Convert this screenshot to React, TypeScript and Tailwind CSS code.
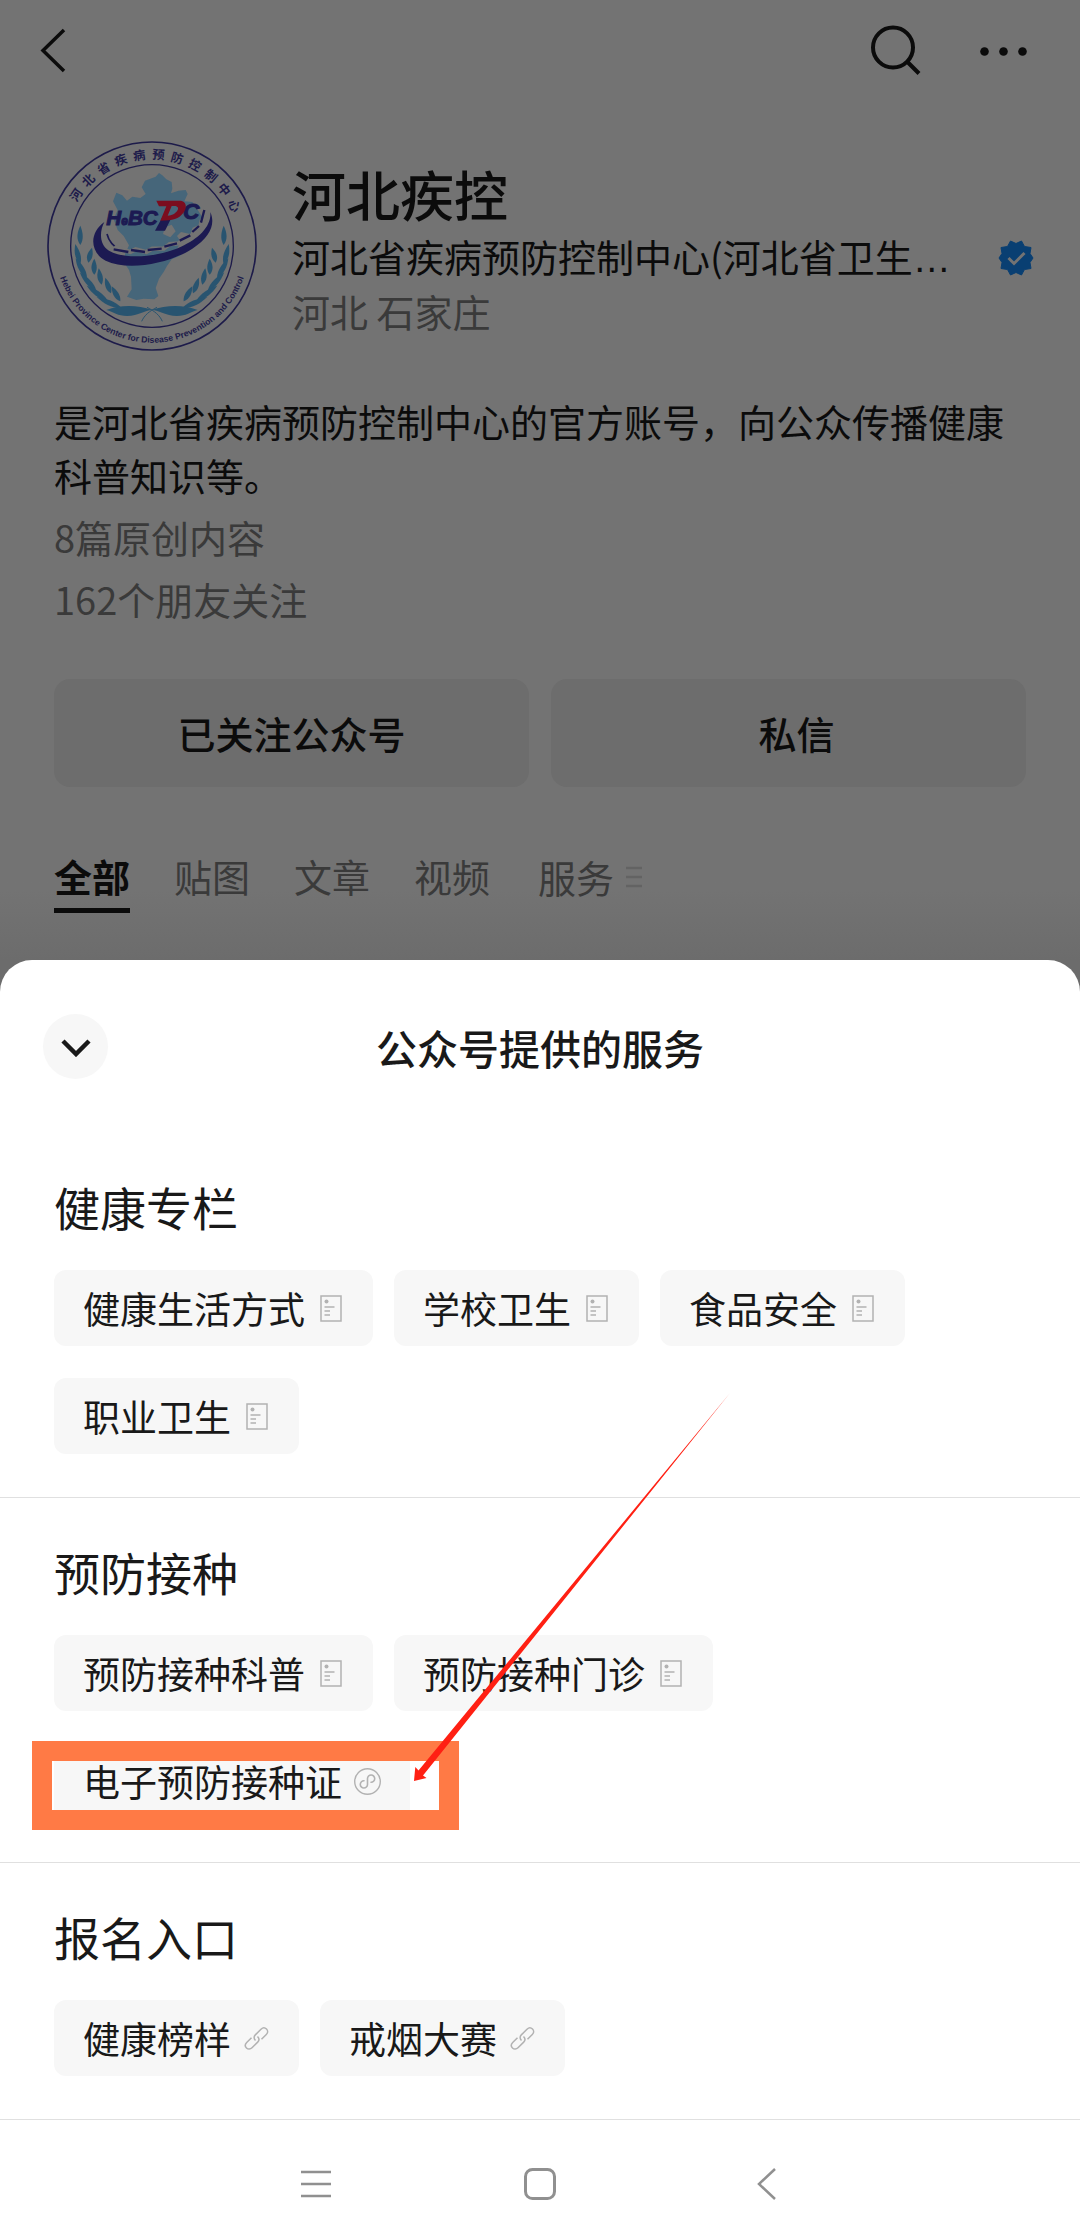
import type { ReactNode } from "react";

type ChipKind = "article" | "mini" | "link";

type Service = {
  label: string;
  kind: ChipKind;
  marked?: boolean;
};

const TABS = ["全部", "贴图", "文章", "视频"];

const GROUPS: { title: string; items: Service[] }[] = [
  {
    title: "健康专栏",
    items: [
      { label: "健康生活方式", kind: "article" },
      { label: "学校卫生", kind: "article" },
      { label: "食品安全", kind: "article" },
      { label: "职业卫生", kind: "article" },
    ],
  },
  {
    title: "预防接种",
    items: [
      { label: "预防接种科普", kind: "article" },
      { label: "预防接种门诊", kind: "article" },
      { label: "电子预防接种证", kind: "mini", marked: true },
    ],
  },
  {
    title: "报名入口",
    items: [
      { label: "健康榜样", kind: "link" },
      { label: "戒烟大赛", kind: "link" },
    ],
  },
];

const SEAL_TEXT = "河北省疾病预防控制中心";

// [x, y, rotation, length] of each leaf on the left branch
const LEAVES = [
  [150, 345, 0, 58],
  [150, 402, -14, 62],
  [174, 398, 14, 46],
  [170, 444, -30, 68],
  [192, 434, 0, 48],
  [198, 482, -42, 74],
  [214, 464, -10, 50],
  [232, 512, -54, 78],
  [242, 490, -20, 50],
  [274, 534, -66, 82],
  [270, 514, -30, 52],
];

function Laurel() {
  return (
    <g fill="#285470">
      {LEAVES.map(([x, y, r, len]) => (
        <path
          key={`${x}-${y}`}
          transform={`translate(${x} ${y}) rotate(${r})`}
          d={`M0 0C-13 ${-len * 0.3} -10 ${-len * 0.65} 0 ${-len}C8 ${-len * 0.65} 11 ${-len * 0.3} 0 0Z`}
        />
      ))}
      <path d="M228 540C270 524 320 524 366 540C342 540 326 558 290 558C262 558 250 546 228 540Z" />
      <path d="M334 574C342 556 356 544 380 532" fill="none" stroke="#285470" strokeWidth="3" />
    </g>
  );
}

function Seal() {
  return (
    <svg viewBox="47 30 636 636" className="size-[212px] shrink-0" role="img" aria-label="河北疾控">
      <circle cx="365" cy="348" r="312" fill="none" stroke="#1d1b4a" strokeWidth="5" />
      <circle cx="365" cy="348" r="244" fill="none" stroke="#1d1b4a" strokeWidth="4" />
      <g
        fill="#1d1b4a"
        fontSize="37"
        fontWeight="700"
        textAnchor="middle"
        fontFamily="'Noto Sans CJK SC', sans-serif"
      >
        {SEAL_TEXT.split("").map((ch, i) => (
          <text key={ch} x="365" y="87" transform={`rotate(${-56 + i * 12} 365 348)`}>
            {ch}
          </text>
        ))}
      </g>
      <path id="seal-arc" d="M78 400A292 292 0 0 0 652 400" fill="none" />
      <text
        fill="#1d1b4a"
        fontSize="26"
        fontWeight="700"
        textAnchor="middle"
        fontFamily="'Liberation Sans Narrow', 'Liberation Sans', sans-serif"
      >
        <textPath href="#seal-arc" startOffset="50%">
          Hebei Province Center for Disease Prevention and Control
        </textPath>
      </text>
      <path
        fill="#46667a"
        d="M360 146L376 140L386 129L396 136L408 148L424 156L426 176L422 190L444 182L466 180L472 192L462 214L486 216L500 236L516 262L508 296L480 312L452 306L440 318L452 336L440 356L452 376L424 388L410 408L400 426L386 446L376 474L384 498L372 508L340 506L318 510L290 500L304 478L302 440L296 420L284 402L284 372L296 346L280 318L262 300L250 268L262 240L248 214L258 188L276 196L290 212L306 200L330 204L346 192L334 172L344 152Z"
      />
      <path d="M404 292L424 284L436 304L420 322L398 312Z" fill="#737373" />
      <Laurel />
      <g transform="translate(730 0) scale(-1 1)">
        <Laurel />
      </g>
      <path
        fill="#1c1a52"
        d="M222 276C178 306 176 366 226 392C292 424 414 402 486 356C540 320 556 282 540 246C544 288 506 326 452 350C378 384 280 388 236 362C208 344 206 308 222 276Z"
      />
      <path d="M230 312C236 336 250 350 270 360" fill="none" stroke="#1c1a52" strokeWidth="5" />
      <path
        d="M246 362L258 352L300 366L316 358L348 366L366 356L400 356L418 342L446 340L460 324L486 316L492 298L510 290L514 272L524 262L520 240"
        fill="none"
        stroke="#737373"
        strokeWidth="13"
      />
      <path
        d="M250 358L294 366M302 360L344 366M352 360L394 356M402 350L440 340M448 332L480 316M486 306L506 288M512 278L522 240"
        fill="none"
        stroke="#1c1a52"
        strokeWidth="7"
      />
      <g
        fill="#1c1a52"
        fontFamily="'Liberation Sans', Arial, sans-serif"
        fontStyle="italic"
        fontWeight="700"
        stroke="#1c1a52"
        strokeWidth="3"
      >
        <text x="228" y="286" fontSize="62">
          H<tspan fontSize="36">e</tspan>BC
        </text>
        <text x="458" y="266" fontSize="68">C</text>
      </g>
      <path d="M396 262L424 262L404 302L374 302Z" fill="#1c1a52" />
      <path
        d="M378 212H446C472 212 470 236 458 250C446 266 428 272 390 272L408 229H386ZM424 228L412 257C438 257 456 228 432 228Z"
        fill="#7b0d1f"
        fillRule="evenodd"
      />
    </svg>
  );
}

function VerifiedBadge() {
  return (
    <svg viewBox="0 0 36 36" className="size-9 shrink-0" role="img" aria-label="已认证">
      <path
        d="M18 3.500L23.500 1L26.500 6.500L33 7.500L32 13.500L35 18L32 22.500L33 28.500L26.500 29.500L23.500 35L18 32.500L12.500 35L9.500 29.500L3 28.500L4 22.500L1 18L4 13.500L3 7.500L9.500 6.500L12.500 1Z"
        fill="#093f72"
        stroke="#093f72"
        strokeWidth="1"
        strokeLinejoin="round"
      />
      <path d="M10.500 18L16 23.500L26.500 13" fill="none" stroke="#737373" strokeWidth="3" />
    </svg>
  );
}

function ChipIcon({ kind }: { kind: ChipKind }) {
  if (kind === "article") {
    return (
      <svg viewBox="0 0 27 27" className="size-[27px]" fill="none" stroke="#b2b2b2" aria-hidden="true">
        <rect x="4" y="1" width="20" height="25" strokeWidth="1.500" />
        <circle cx="9.500" cy="6.500" r="2" fill="#b2b2b2" stroke="none" />
        <path d="M7.500 12H17.500M7.500 16H13M7.500 20H13" strokeWidth="1.500" />
      </svg>
    );
  }
  if (kind === "mini") {
    return (
      <svg viewBox="0 0 27 27" className="size-[27px]" fill="none" stroke="#b2b2b2" aria-hidden="true">
        <circle cx="13.500" cy="13.500" r="12.800" strokeWidth="1.400" />
        <path
          d="M10 12.800A3.600 3.600 0 1 0 13.500 16.400V10.600A3.600 3.600 0 1 1 17 14.200"
          strokeWidth="1.600"
          strokeLinecap="round"
        />
      </svg>
    );
  }
  return (
    <svg viewBox="0 0 27 27" className="size-[27px]" fill="none" stroke="#b2b2b2" strokeWidth="1.500" aria-hidden="true">
      <path d="M12.500 15.500C10.700 13.700 10.700 11.500 12.300 9.900L18 4.200C19.700 2.500 22 2.500 23.500 4C25 5.500 25 7.800 23.300 9.500L18.500 14.300" />
      <path d="M14.500 11.500C16.300 13.300 16.300 15.500 14.700 17.100L9 22.800C7.300 24.500 5 24.500 3.500 23C2 21.500 2 19.200 3.700 17.500L8.500 12.700" />
    </svg>
  );
}

// Red pointer plus the orange frame around the highlighted service.
function Marker() {
  return (
    <>
      <span className="pointer-events-none absolute -top-[2px] -right-[49px] -bottom-[11px] -left-[22px] border-20 border-[#ff7a45]" />
      <svg
        viewBox="0 0 322 397"
        className="pointer-events-none absolute bottom-[36px] left-[358px] z-10 h-[397px] w-[322px]"
        aria-hidden="true"
      >
        <path d="M2 395L3.300 381L6.500 384.500L318 7L11 389.500L14.500 392Z" fill="#ff2013" />
      </svg>
    </>
  );
}

function ServiceChip({ item }: { item: Service }) {
  return (
    <li className="relative">
      <a
        href="#"
        className={`flex h-[76px] items-center gap-3 bg-[#f7f7f7] px-[29px] text-[37px] leading-[52px] ${
          item.marked ? "" : "rounded-xl"
        }`}
      >
        {item.label}
        <ChipIcon kind={item.kind} />
      </a>
      {item.marked && <Marker />}
    </li>
  );
}

function ProfileButton({ className = "", children }: { className?: string; children: ReactNode }) {
  return (
    <button
      className={`h-[108px] rounded-2xl bg-[#6d6d6d] text-[38px] leading-[54px] font-medium ${className}`}
    >
      {children}
    </button>
  );
}

function TopBar() {
  return (
    <header className="flex h-[100px] items-center justify-between pr-[52px] pl-[36px]">
      <button aria-label="返回">
        <svg viewBox="0 0 32 48" className="h-12 w-8" fill="none" stroke="#0b0b0b" strokeWidth="3.500">
          <path d="M28 4L7 24.500L28 45" />
        </svg>
      </button>
      <div className="flex items-center gap-14">
        <button aria-label="搜索">
          <svg viewBox="0 0 56 56" className="size-14" fill="none" stroke="#0b0b0b" strokeWidth="4">
            <circle cx="25" cy="25.500" r="20" />
            <path d="M39.500 40L51 51.500" />
          </svg>
        </button>
        <button aria-label="更多">
          <svg viewBox="0 0 48 48" className="size-12" fill="#0b0b0b">
            <circle cx="4.500" cy="25.500" r="4.300" />
            <circle cx="23.500" cy="25.500" r="4.300" />
            <circle cx="42.500" cy="25.500" r="4.300" />
          </svg>
        </button>
      </div>
    </header>
  );
}

function Profile() {
  return (
    <section className="text-[#0b0b0b]">
      <div className="flex items-start px-[46px] pt-10">
        <Seal />
        <div className="ml-[34px] min-w-0 flex-1 pt-[18px]">
          <h1 className="text-[54px] leading-[72px] font-medium">河北疾控</h1>
          <div className="flex items-center justify-between text-[38px] leading-[52px]">
            <p className="whitespace-nowrap">
              河北省疾病预防控制中心(河北省卫生<span className="font-['Liberation_Sans',sans-serif]">…</span>
            </p>
            <VerifiedBadge />
          </div>
          <p className="text-[38px] leading-[52px] text-[#3a3a3a]">河北 石家庄</p>
        </div>
      </div>

      <div className="px-[54px] pt-[42px] text-[38px] leading-[54px]">
        <p>是河北省疾病预防控制中心的官方账号，向公众传播健康科普知识等。</p>
        <div className="pt-1 leading-[62px] text-[#3a3a3a]">
          <p>8篇原创内容</p>
          <p>162个朋友关注</p>
        </div>
        <div className="mt-[49px] grid grid-cols-2 gap-[22px]">
          <ProfileButton>已关注公众号</ProfileButton>
          <ProfileButton className="pl-4">私信</ProfileButton>
        </div>
      </div>

      <nav className="flex gap-11 bg-linear-to-b from-[#737373] from-60% to-[#6c6c6c] px-[54px] pt-[61px] pb-[47px] text-[38px] leading-[56px]">
        {TABS.map((tab, i) => (
          <a
            key={tab}
            href="#"
            className={
              i === 0
                ? "border-b-5 border-[#0b0b0b] pb-1 font-bold"
                : "pb-2 text-[#3a3a3a]"
            }
          >
            {tab}
          </a>
        ))}
        <a href="#" className="ml-1 flex items-center gap-3 pb-2 text-[#3a3a3a]">
          服务
          <svg viewBox="0 0 16 28" className="h-7 w-4" stroke="#636363" strokeWidth="2.500" aria-hidden="true">
            <path d="M0 5H16M0 14H16M0 23H16" />
          </svg>
        </a>
      </nav>
    </section>
  );
}

function ServiceSheet() {
  return (
    <section className="rounded-t-[32px] bg-white text-[#191919]">
      <div className="grid h-[173px] grid-cols-[65px_1fr_65px] items-center px-[43px]">
        <button aria-label="收起" className="flex size-[65px] items-center justify-center rounded-full bg-[#f7f7f7]">
          <svg viewBox="0 0 30 20" className="h-5 w-[30px]" fill="none" stroke="#191919" strokeWidth="4.500">
            <path d="M2 4L15 17L28 4" />
          </svg>
        </button>
        <h2 className="text-center text-[41px] leading-[56px] font-medium">公众号提供的服务</h2>
      </div>
      {GROUPS.map((group) => (
        <section key={group.title} className="border-b border-[#e0e0e0] px-[54px] pt-[39px] pb-[43px]">
          <h3 className="text-[46px] leading-[68px]">{group.title}</h3>
          <ul className="mt-[30px] flex flex-wrap gap-x-[21px] gap-y-8">
            {group.items.map((item) => (
              <ServiceChip key={item.label} item={item} />
            ))}
          </ul>
        </section>
      ))}
    </section>
  );
}

function SystemBar() {
  return (
    <footer className="flex flex-1 items-start justify-center gap-[192px] bg-white pt-[48px] pb-[18px]">
      <button aria-label="最近任务">
        <svg viewBox="0 0 32 32" className="size-8" stroke="#909090" strokeWidth="2.500">
          <path d="M1 4H31M1 16H31M1 28H31" />
        </svg>
      </button>
      <button aria-label="主屏幕">
        <svg viewBox="0 0 32 32" className="size-8" fill="none" stroke="#909090" strokeWidth="3">
          <rect x="1.500" y="1.500" width="29" height="29" rx="7" />
        </svg>
      </button>
      <button aria-label="返回上一级">
        <svg viewBox="0 0 32 32" className="size-8" fill="none" stroke="#909090" strokeWidth="2.500">
          <path d="M27 1L11 16L27 31" />
        </svg>
      </button>
    </footer>
  );
}

export default function App() {
  return (
    <div
      lang="zh-CN"
      className="flex min-h-screen flex-col bg-[#737373] font-['Noto_Sans_CJK_SC','Liberation_Sans',sans-serif]"
    >
      <TopBar />
      <Profile />
      <div className="bg-[#6c6c6c]">
        <ServiceSheet />
      </div>
      <SystemBar />
    </div>
  );
}
